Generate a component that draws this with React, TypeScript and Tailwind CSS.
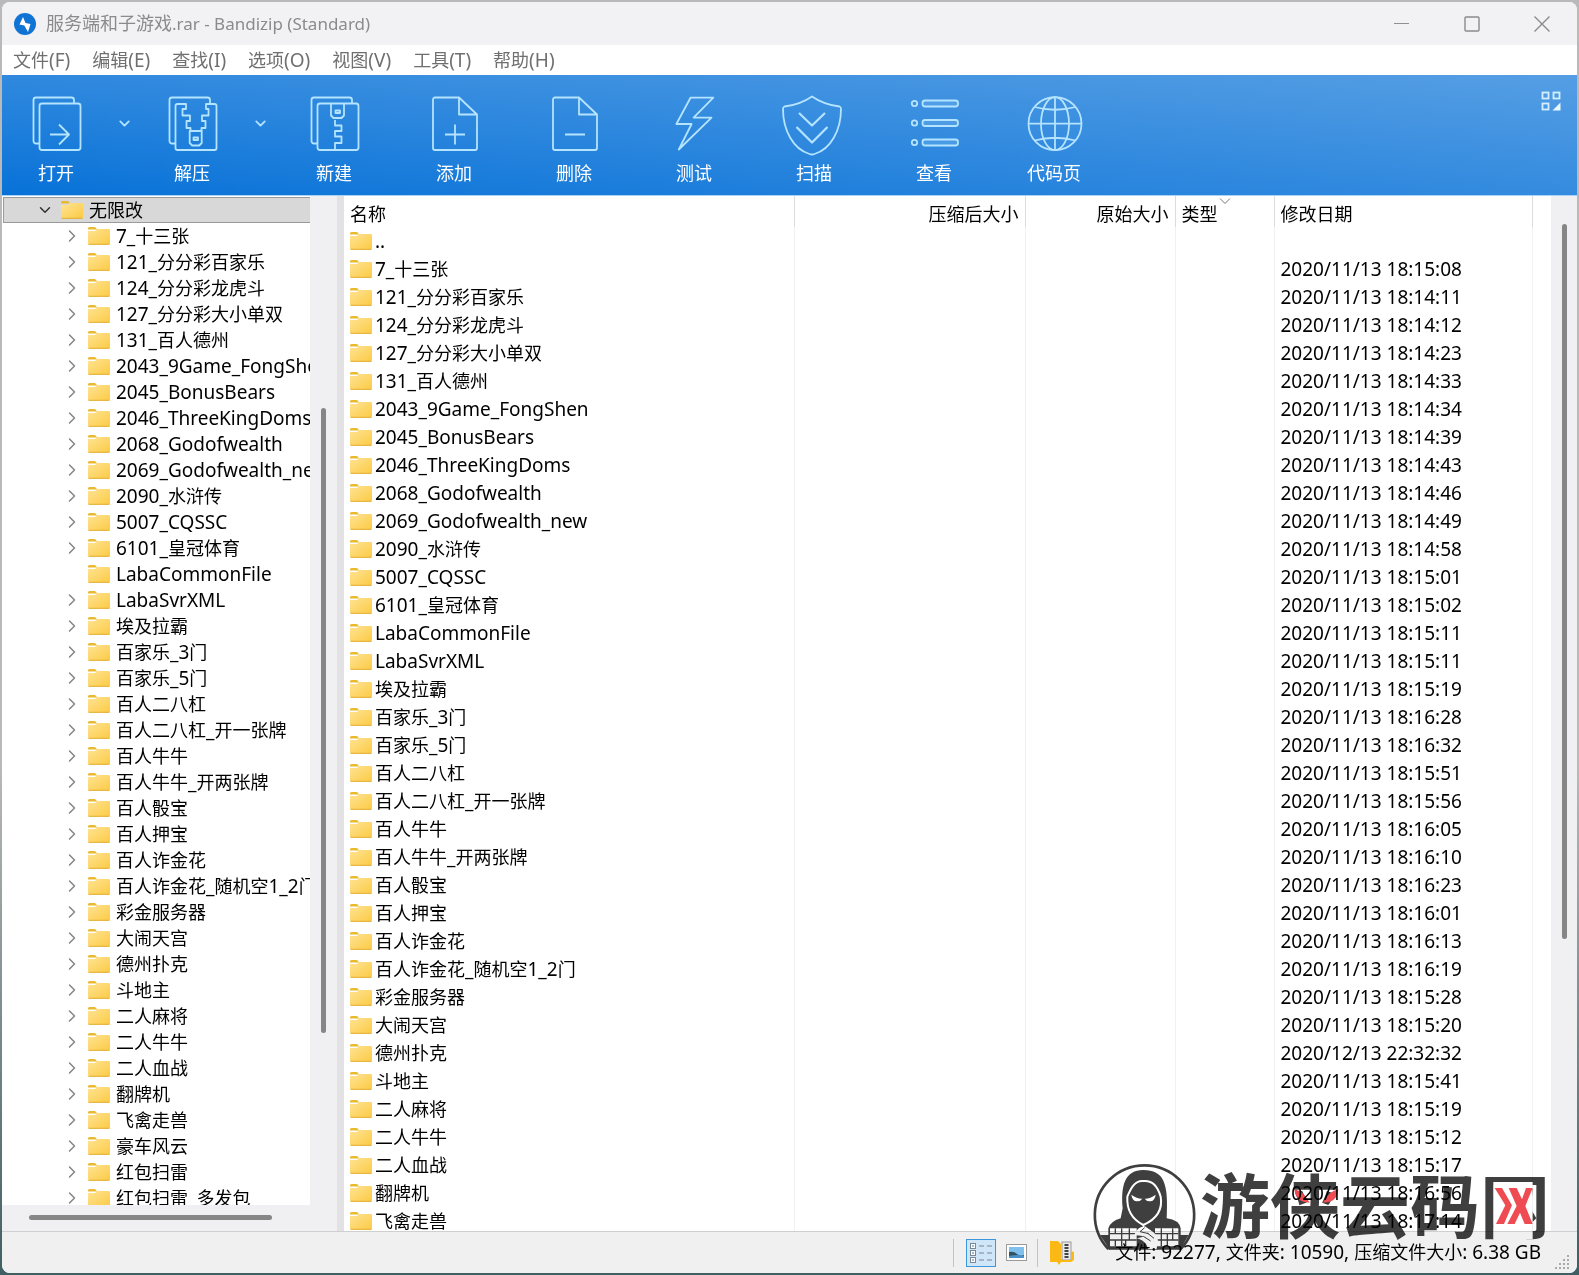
import React from 'react';
import { ChevronDown, ChevronRight } from 'lucide-react';

type Entry = { name: string; date: string; leaf?: boolean };

const entries: Entry[] = [
  { name: '7_十三张', date: '2020/11/13 18:15:08' },
  { name: '121_分分彩百家乐', date: '2020/11/13 18:14:11' },
  { name: '124_分分彩龙虎斗', date: '2020/11/13 18:14:12' },
  { name: '127_分分彩大小单双', date: '2020/11/13 18:14:23' },
  { name: '131_百人德州', date: '2020/11/13 18:14:33' },
  { name: '2043_9Game_FongShen', date: '2020/11/13 18:14:34' },
  { name: '2045_BonusBears', date: '2020/11/13 18:14:39' },
  { name: '2046_ThreeKingDoms', date: '2020/11/13 18:14:43' },
  { name: '2068_Godofwealth', date: '2020/11/13 18:14:46' },
  { name: '2069_Godofwealth_new', date: '2020/11/13 18:14:49' },
  { name: '2090_水浒传', date: '2020/11/13 18:14:58' },
  { name: '5007_CQSSC', date: '2020/11/13 18:15:01' },
  { name: '6101_皇冠体育', date: '2020/11/13 18:15:02' },
  { name: 'LabaCommonFile', date: '2020/11/13 18:15:11', leaf: true },
  { name: 'LabaSvrXML', date: '2020/11/13 18:15:11' },
  { name: '埃及拉霸', date: '2020/11/13 18:15:19' },
  { name: '百家乐_3门', date: '2020/11/13 18:16:28' },
  { name: '百家乐_5门', date: '2020/11/13 18:16:32' },
  { name: '百人二八杠', date: '2020/11/13 18:15:51' },
  { name: '百人二八杠_开一张牌', date: '2020/11/13 18:15:56' },
  { name: '百人牛牛', date: '2020/11/13 18:16:05' },
  { name: '百人牛牛_开两张牌', date: '2020/11/13 18:16:10' },
  { name: '百人骰宝', date: '2020/11/13 18:16:23' },
  { name: '百人押宝', date: '2020/11/13 18:16:01' },
  { name: '百人诈金花', date: '2020/11/13 18:16:13' },
  { name: '百人诈金花_随机空1_2门', date: '2020/11/13 18:16:19' },
  { name: '彩金服务器', date: '2020/11/13 18:15:28' },
  { name: '大闹天宫', date: '2020/11/13 18:15:20' },
  { name: '德州扑克', date: '2020/12/13 22:32:32' },
  { name: '斗地主', date: '2020/11/13 18:15:41' },
  { name: '二人麻将', date: '2020/11/13 18:15:19' },
  { name: '二人牛牛', date: '2020/11/13 18:15:12' },
  { name: '二人血战', date: '2020/11/13 18:15:17' },
  { name: '翻牌机', date: '2020/11/13 18:16:56' },
  { name: '飞禽走兽', date: '2020/11/13 18:17:14' }
];

const treeNames = [
  ...entries,
  { name: '豪车风云', leaf: false },
  { name: '红包扫雷', leaf: false },
  { name: '红包扫雷_多发包', leaf: false }
];

const menus = ['文件(F)', '编辑(E)', '查找(I)', '选项(O)', '视图(V)', '工具(T)', '帮助(H)'];

// latin runs get their own size, chinese runs are always 18px
const Label: React.FC<{ text: string; small?: boolean }> = ({ text, small }) => (
  <span className={small ? 'whitespace-nowrap text-[17px]' : 'whitespace-nowrap text-[19px]'}>
    {text
      .split(/([\u4e00-\u9fff]+)/)
      .filter(Boolean)
      .map((part, i) =>
        /[\u4e00-\u9fff]/.test(part) ? (
          <span key={i} className="text-[18px]">
            {part}
          </span>
        ) : (
          part
        )
      )}
  </span>
);

const Folder: React.FC = () => (
  <svg width="22" height="18" viewBox="0 0 22 18" className="shrink-0">
    <defs>
      <linearGradient id="folder" x1="0" y1="0" x2="1" y2="1">
        <stop offset="0" stopColor="#ffe394" />
        <stop offset="1" stopColor="#fccb45" />
      </linearGradient>
    </defs>
    <path d="M0 1.5A1.5 1.5 0 0 1 1.500 0H7l1.500 1.500H0z" fill="#e9b92f" />
    <path d="M0 1h8l1 1.500H0z" fill="#e9b92f" />
    <path d="M0 4h7l2-2h12a1 1 0 0 1 1 1v13.500a1 1 0 0 1-1 1H1a1 1 0 0 1-1-1z" fill="url(#folder)" />
    <path d="M.5 17.300h21" stroke="#e3ac2c" strokeWidth="1" />
  </svg>
);

const ToolIcon: React.FC<{ children: React.ReactNode }> = ({ children }) => (
  <svg
    width="60"
    height="62"
    viewBox="0 0 60 62"
    fill="none"
    stroke="#b4e4ff"
    strokeWidth="1.8"
    strokeLinejoin="round"
    className="overflow-visible"
  >
    {children}
  </svg>
);

const backSheet = 'M13 49.500H10a2.500 2.500 0 0 1-2.500-2.500V6A2.500 2.500 0 0 1 10 3.500h35.500A2.500 2.500 0 0 1 48 6v4';
const page = 'M11 3.500h24L53 20.500V54a2 2 0 0 1-2 2H11a2 2 0 0 1-2-2V5.500a2 2 0 0 1 2-2zM35 3.500v17h18';

const openIcon = (
  <ToolIcon>
    <path d={backSheet} />
    <rect x="13.500" y="9.500" width="41" height="46.500" rx="2.500" />
    <path d="M24 40.500h19M33 30.500l10 10-10 10" />
  </ToolIcon>
);

const extractIcon = (
  <ToolIcon>
    <path d={backSheet} />
    <path d="M28.500 37v-3h-4v-7h3.500v-5.500h-7.500V15H24v-5h-8.500a2 2 0 0 0-2 2v42a2 2 0 0 0 2 2H52.500a2 2 0 0 0 2-2V12a2 2 0 0 0-2-2h-8.500v5h2.500v6.500h-6.500V27h3.500v7h-4v3" />
    <path d="M27.700 37h12v12l-2.500 2.500h-7L27.700 49z" />
    <rect x="31.500" y="43.500" width="4.500" height="2.500" />
  </ToolIcon>
);

const newIcon = (
  <ToolIcon>
    <path d={backSheet} />
    <rect x="13.500" y="9.500" width="41" height="46.500" rx="2.500" />
    <path d="M27 9.500v12l2.500 2.500h8l2.500-2.500v-12M31 26v5.500h6.500V37H31v5.500h6.500v6.500H31v7" />
    <rect x="31.500" y="16.500" width="4.500" height="2.500" />
  </ToolIcon>
);

const tools = [
  {
    label: '添加',
    icon: (
      <ToolIcon>
        <path d={page} />
        <path d="M21 40.500h20M31 30.500v20" />
      </ToolIcon>
    )
  },
  {
    label: '删除',
    icon: (
      <ToolIcon>
        <path d={page} />
        <path d="M21 40.500h20" />
      </ToolIcon>
    )
  },
  {
    label: '测试',
    icon: (
      <ToolIcon>
        <path d="M26.500 3.700H49.300L29.600 23.700H47.500L14.800 55.500 27.600 30H12.400z" />
      </ToolIcon>
    )
  },
  {
    label: '扫描',
    icon: (
      <ToolIcon>
        <path d="M28 2.500C36 8 46 11.500 55.500 12.500Q57 13 57 15C57 36 47 55 30.500 60Q28 61 25.500 60C9 55-1 36-1 15Q-1 13 .5 12.500C10 11.500 20 8 28 2.500z" />
        <path d="M15 19l13 12.500L41 19M12.500 33L28 48.500 43.500 33" strokeWidth="2.2" />
      </ToolIcon>
    )
  },
  {
    label: '查看',
    icon: (
      <ToolIcon>
        {[9.5, 29, 48.5].map(y => (
          <g key={y}>
            <circle cx="10.500" cy={y} r="2.700" />
            <rect x="18.500" y={y - 3} width="35.500" height="6" rx="2.500" fill="#6db4ee" fillOpacity="0.4" />
          </g>
        ))}
      </ToolIcon>
    )
  },
  {
    label: '代码页',
    icon: (
      <ToolIcon>
        <circle cx="31" cy="29.700" r="26.500" />
        <ellipse cx="31" cy="29.700" rx="14" ry="26.500" />
        <path d="M31 3v53.500M4.500 29.700h53M10.500 13Q31 18.500 51.500 13M10.500 46.500Q31 41 51.500 46.500" />
      </ToolIcon>
    )
  }
];

const ToolButton: React.FC<{ label: string; icon: React.ReactNode; narrow?: boolean }> = ({
  label,
  icon,
  narrow
}) => (
  <button
    className={
      narrow
        ? 'flex w-[108px] flex-col items-center gap-[5px] pt-[19px]'
        : 'flex w-[120px] flex-col items-center gap-[5px] pt-[19px]'
    }
  >
    {icon}
    <span className="text-[18px] leading-6 text-white">{label}</span>
  </button>
);

const DropArrow: React.FC<{ label: string }> = ({ label }) => (
  <button aria-label={label} className="flex w-7 justify-center pt-10">
    <ChevronDown size={17} strokeWidth={2.5} color="#b4e4ff" />
  </button>
);

const TitleBar: React.FC = () => (
  <header className="flex h-[43px] shrink-0 items-stretch bg-[#f2f1f4]">
    <div className="flex flex-1 items-center gap-2.5 pl-3 text-[#8b8b8d]">
      <svg width="22" height="22" viewBox="0 0 22 22">
        <circle cx="11" cy="11" r="11" fill="#1173d4" />
        <path d="M9 4L5.500 11.500l5 1-.5-.5 4 7 2.500-8-5-1z" fill="#fff" />
      </svg>
      <h1 className="leading-6">
        <Label text="服务端和子游戏.rar - Bandizip (Standard)" small />
      </h1>
    </div>
    <button aria-label="最小化" className="flex w-[70px] items-center justify-center">
      <svg width="16" height="16" stroke="#8f8f91" fill="none">
        <path d="M0 7.500h15" />
      </svg>
    </button>
    <button aria-label="最大化" className="flex w-[70px] items-center justify-center">
      <svg width="16" height="16" stroke="#8a8a8c" strokeWidth="1.4" fill="none">
        <rect x="1" y="1" width="14" height="14" rx="1" />
      </svg>
    </button>
    <button aria-label="关闭" className="flex w-[70px] items-center justify-center">
      <svg width="16" height="16" stroke="#8a8a8c" strokeWidth="1.4" fill="none">
        <path d="M.5.5l15 15M15.500.5l-15 15" />
      </svg>
    </button>
  </header>
);

const Toolbar: React.FC = () => (
  <div className="flex h-[121px] shrink-0 items-start border-b border-[#a9d3f5] bg-[linear-gradient(to_right,rgba(255,255,255,0),rgba(255,255,255,0.18)),linear-gradient(to_bottom,#3089de,#0872d8)]">
    <ToolButton label="打开" icon={openIcon} narrow />
    <DropArrow label="打开选项" />
    <ToolButton label="解压" icon={extractIcon} narrow />
    <DropArrow label="解压选项" />
    <ToolButton label="新建" icon={newIcon} />
    {tools.map(tool => (
      <ToolButton key={tool.label} label={tool.label} icon={tool.icon} />
    ))}
    <button aria-label="布局" className="ml-auto mr-4 mt-4">
      <svg width="20" height="20" fill="none" stroke="#d3efff" strokeWidth="1.8">
        <rect x="1.500" y="1.500" width="6" height="6" />
        <rect x="12.500" y="1.500" width="6" height="6" />
        <rect x="1.500" y="12.500" width="6" height="6" />
        <path d="M19.500 11.500v8h-8z" fill="#eaf8ff" stroke="none" />
      </svg>
    </button>
  </div>
);

const Tree: React.FC = () => (
  <aside className="flex w-[335px] shrink-0 flex-col bg-[#f0eff1]">
    <div className="flex min-h-0 flex-1">
      <ul className="w-[308px] overflow-hidden bg-white pt-px">
        <li className="ml-px flex h-[26px] items-center border border-r-0 border-[#9a9a9a] bg-[#d9d8d8] pl-8">
          <button aria-label="折叠" className="mr-[7px]">
            <ChevronDown size={18} strokeWidth={2} color="#333" />
          </button>
          <Folder />
          <span className="ml-1.5 leading-6">
            <Label text="无限改" />
          </span>
        </li>
        {treeNames.map(item => (
          <li key={item.name} className="flex h-[26px] items-center pl-[60px]">
            {item.leaf ? (
              <span className="mr-1.5 w-5" />
            ) : (
              <button aria-label={'展开 ' + item.name} className="mr-1.5 w-5">
                <ChevronRight size={20} strokeWidth={1.8} color="#858585" />
              </button>
            )}
            <Folder />
            <span className="ml-1.5 leading-6">
              <Label text={item.name} />
            </span>
          </li>
        ))}
      </ul>
      <div className="flex w-[27px] flex-col items-center">
        <div className="h-[21%]" />
        <div className="h-[62%] w-[5px] rounded-full bg-[#868686]" />
      </div>
    </div>
    <div className="h-[26px] shrink-0 pl-[27px] pt-2.5">
      <div className="h-[5px] w-[243px] rounded-full bg-[#868686]" />
    </div>
  </aside>
);

const FileList: React.FC = () => (
  <div className="min-w-0 flex-1 overflow-hidden bg-white">
    <table className="w-full table-fixed border-collapse">
      <colgroup>
        <col />
        <col className="w-[231px]" />
        <col className="w-[150px]" />
        <col className="w-[99px]" />
        <col className="w-[258px]" />
        <col className="w-[19px]" />
      </colgroup>
      <thead>
        <tr className="h-[31px] text-[18px] leading-6">
          <th className="border-r border-[#dcdcdc] p-0 pl-1.5 pt-1 text-left font-normal">名称</th>
          <th className="border-r border-[#dcdcdc] p-0 pr-1.5 pt-1 text-right font-normal">压缩后大小</th>
          <th className="border-r border-[#dcdcdc] p-0 pr-1.5 pt-1 text-right font-normal">原始大小</th>
          <th className="relative border-r border-[#dcdcdc] p-0 pl-1.5 pt-1 text-left font-normal">
            类型
            <svg width="12" height="7" fill="none" stroke="#777" className="absolute left-1/2 top-0.5 -translate-x-1/2">
              <path d="M1 .5l5 5 5-5" />
            </svg>
          </th>
          <th className="border-r border-[#dcdcdc] p-0 pl-1.5 pt-1 text-left font-normal">修改日期</th>
          <th className="p-0" />
        </tr>
      </thead>
      <tbody>
        {[{ name: '..', date: '' }, ...entries].map(row => (
          <tr key={row.name} className="h-7">
            <td className="border-r border-[#f1f1f1] p-0">
              <div className="flex h-7 items-center gap-[3px] pl-1.5 leading-6">
                <Folder />
                <Label text={row.name} />
              </div>
            </td>
            <td className="border-r border-[#f1f1f1] p-0" />
            <td className="border-r border-[#f1f1f1] p-0" />
            <td className="border-r border-[#f1f1f1] p-0" />
            <td className="border-r border-[#f1f1f1] p-0 pl-1.5 leading-6">
              <Label text={row.date} />
            </td>
            <td className="p-0" />
          </tr>
        ))}
      </tbody>
    </table>
  </div>
);

const StatusBar: React.FC = () => (
  <footer className="flex h-[42px] shrink-0 items-center border-t border-[#cfcfcf] bg-[#f0f0f1]">
    <div className="ml-auto flex h-7 items-center border-l border-[#c4c4c4] pl-3">
      <button aria-label="详细信息" className="flex h-7 w-[30px] items-center justify-center border border-[#3d97dc] bg-[#cfe6f8]">
        <svg width="26" height="22" fill="none" stroke="#7d8790">
          {[1.5, 8.5, 15.5].map(y => (
            <g key={y}>
              <rect x="2.500" y={y} width="5" height="5" fill="#fff" />
              <path d={`M11 ${y + 2.5}h5M19 ${y + 2.5}h5`} />
              <path d={`M4 ${y + 2.5}h2`} stroke="#2f7fc4" />
            </g>
          ))}
        </svg>
      </button>
      <button aria-label="缩略图" className="ml-2.5 mr-2.5">
        <svg width="21" height="17">
          <rect x=".5" y=".5" width="20" height="16" fill="#fff" stroke="#9b9b9b" />
          <rect x="3" y="3" width="15" height="11" fill="#7fc0ee" />
          <path d="M3 8q5-1 8 2t7 1v3H3z" fill="#35535f" />
          <path d="M3 12q8-2 15 0v2H3z" fill="#4b8fc9" />
        </svg>
      </button>
    </div>
    <div className="flex h-7 items-center gap-10 border-l border-[#c4c4c4] pl-3">
      <svg width="25" height="26">
        <rect x="12" y="2" width="9" height="18" fill="#e9e9e9" stroke="#9a9a9a" />
        <path d="M16.500 4v14" stroke="#444" strokeWidth="4" strokeDasharray="2 1" />
        <path d="M0 1h8l3 3v18l-2 3-2-3H0zM21 11l3 1v8l-3 2H11v-2h10z" fill="#fdb913" />
      </svg>
      <p className="leading-6">
        <Label text="文件: 92277, 文件夹: 10590, 压缩文件大小: 6.38 GB" />
      </p>
    </div>
    <svg width="16" height="16" fill="#aaa" className="ml-3.5 mr-1.5 mt-5">
      {[0, 1, 2, 3].map(r =>
        [0, 1, 2, 3]
          .filter(c => c + r >= 3)
          .map(c => <rect key={`${r}-${c}`} x={c * 4} y={r * 4} width="2" height="2" />)
      )}
    </svg>
  </footer>
);

const Watermark: React.FC = () => (
  <div className="pointer-events-none absolute bottom-[13px] right-[17px] flex mix-blend-multiply">
    <svg width="110" height="105" viewBox="0 0 330 315">
      <path d="M55 282A149 149 0 1 1 272 282" fill="none" stroke="#3f3f3f" strokeWidth="8" />
      <path d="M30 240l30 0v45H60zM296 240l-30 0v45h4z" fill="#3f3f3f" />
      <path
        d="M98 160C92 90 105 45 160 45C222 45 236 85 230 190Q268 195 272 220V284H55V220Q60 200 92 190z"
        fill="#3f3f3f"
      />
      <path
        d="M160 78C135 75 122 100 112 125C110 160 120 190 160 210C205 190 218 160 212 125C205 100 190 75 160 78z"
        fill="none"
        stroke="#fff"
        strokeWidth="6"
      />
      <path d="M124 119q18 13 33 12-6 9-18 8-13-3-15-20zM197 119q-18 13-33 12 6 9 18 8 13-3 15-20z" fill="#fff" />
      <path d="M60 220h80v54H60zM195 220h70v54h-70z" fill="#fff" />
      <path
        d="M60 236h80M60 255h80M76 220v18M95 220v54M118 220v35M76 255v19M107 255v19M195 236h70M195 255h70M214 220v54M232 236v38M248 220v35"
        stroke="#3f3f3f"
        strokeWidth="4"
      />
      <path
        d="M160 210v15M136 238q8-20 28-22l18 12q18 10 20 30l-4 22h-22q-6-22-28-30l20-4-16-6z"
        fill="#fff"
        stroke="#fff"
        strokeWidth="4"
      />
      <path d="M164 218l-14 12 26 6M160 244l22 14M172 234l20 16" fill="none" stroke="#3f3f3f" strokeWidth="3" />
    </svg>
    <div className="relative w-[360px] text-[70px] leading-[102px] text-[#3f3f3f]">
      <span className="font-bold">游侠云码网</span>
      <svg width="360" height="90" viewBox="0 0 1080 270" className="absolute left-0 top-[5px]" fill="#ef4b52">
        <path d="M283 88q28 6 46 40-42 0-46-40zM415 88q-28 6-46 40 44 0 46-40z" />
        <rect x="880" y="66" width="118" height="172" fill="#fff" />
        <path d="M884 84h22l30 52-24 56h-24l28-56zM926 84h24l16 34 12-34h20l-22 54 22 54h-24l-14-34-16 34h-22l28-54z" />
      </svg>
    </div>
  </div>
);

export default function App() {
  return (
    <div className="h-screen bg-[linear-gradient(to_bottom,#b9b9b9_60%,#3f5f63)] p-0.5 font-['Noto_Sans','Noto_Sans_CJK_SC',sans-serif] text-black">
      <main className="relative flex h-full flex-col overflow-hidden rounded-lg bg-white">
        <TitleBar />
        <nav className="flex h-[30px] shrink-0 items-center gap-[22px] bg-white pl-[11px] text-[#6f6f6f]">
          {menus.map(menu => (
            <button key={menu} className="leading-6">
              <Label text={menu} />
            </button>
          ))}
        </nav>
        <Toolbar />
        <div className="flex min-h-0 flex-1">
          <Tree />
          <div className="w-[7px] shrink-0 bg-[#e2e1e4]" />
          <FileList />
          <div className="flex w-[26px] shrink-0 flex-col items-center bg-[#f0eff1] pt-7">
            <div className="h-[71%] w-[5px] rounded-full bg-[#868686]" />
          </div>
        </div>
        <StatusBar />
        <Watermark />
      </main>
    </div>
  );
}
